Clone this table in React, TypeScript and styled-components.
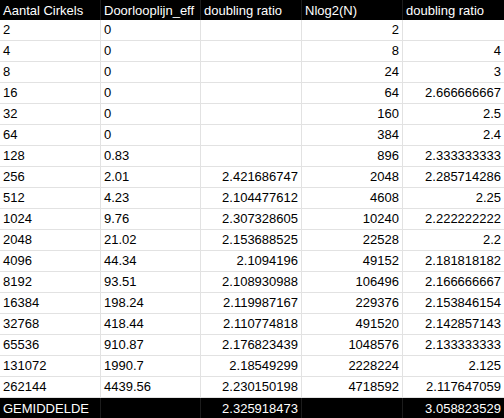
import React from "react";
import styled, { createGlobalStyle } from "styled-components";

const Global = createGlobalStyle`
  html, body { margin: 0; padding: 0; background: #fff; }
  body { font-family: "Liberation Sans", Arial, sans-serif; }
`;

const Grid = styled.div`
  display: grid;
  grid-template-columns: 101px 100px 101px 101px 101px;
  width: 504px;
  font-family: "Liberation Sans", Arial, sans-serif;
  font-size: 13px;
`;

const Cell = styled.div<{ $dark?: boolean; $right?: boolean; $last?: boolean }>`
  box-sizing: border-box;
  height: ${(p) => (p.$dark ? "20px" : "21px")};
  padding: ${(p) => (p.$dark ? "0 3px" : "0 3px 1px 3px")};
  display: flex;
  align-items: center;
  justify-content: ${(p) => (p.$right ? "flex-end" : "flex-start")};
  white-space: nowrap;
  overflow: hidden;
  background: ${(p) => (p.$dark ? "#000" : "#fff")};
  color: ${(p) => (p.$dark ? "#fff" : "#000")};
  border-right: ${(p) => (p.$last ? "none" : p.$dark ? "1px solid #1c1c1c" : "1px solid #e2e2e2")};
  border-bottom: ${(p) => (p.$dark ? "none" : "1px solid #e2e2e2")};
`;

const header = ["Aantal Cirkels", "Doorlooplijn_eff", "doubling ratio", "Nlog2(N)", "doubling ratio"];

const rows: string[][] = [
  ["2", "0", "", "2", ""],
  ["4", "0", "", "8", "4"],
  ["8", "0", "", "24", "3"],
  ["16", "0", "", "64", "2.666666667"],
  ["32", "0", "", "160", "2.5"],
  ["64", "0", "", "384", "2.4"],
  ["128", "0.83", "", "896", "2.333333333"],
  ["256", "2.01", "2.421686747", "2048", "2.285714286"],
  ["512", "4.23", "2.104477612", "4608", "2.25"],
  ["1024", "9.76", "2.307328605", "10240", "2.222222222"],
  ["2048", "21.02", "2.153688525", "22528", "2.2"],
  ["4096", "44.34", "2.1094196", "49152", "2.181818182"],
  ["8192", "93.51", "2.108930988", "106496", "2.166666667"],
  ["16384", "198.24", "2.119987167", "229376", "2.153846154"],
  ["32768", "418.44", "2.110774818", "491520", "2.142857143"],
  ["65536", "910.87", "2.176823439", "1048576", "2.133333333"],
  ["131072", "1990.7", "2.18549299", "2228224", "2.125"],
  ["262144", "4439.56", "2.230150198", "4718592", "2.117647059"],
];

const footer = ["GEMIDDELDE", "", "2.325918473", "", "3.058823529"];

export default function App() {
  return (
    <>
      <Global />
      <Grid>
        {header.map((h, i) => (
          <Cell key={`h${i}`} $dark $last={i === 4}>
            {h}
          </Cell>
        ))}
        {rows.map((r, ri) =>
          r.map((v, ci) => (
            <Cell key={`${ri}-${ci}`} $right={ci >= 2} $last={ci === 4}>
              {v}
            </Cell>
          ))
        )}
        {footer.map((f, i) => (
          <Cell key={`f${i}`} $dark $right={i >= 2} $last={i === 4}>
            {f}
          </Cell>
        ))}
      </Grid>
    </>
  );
}
